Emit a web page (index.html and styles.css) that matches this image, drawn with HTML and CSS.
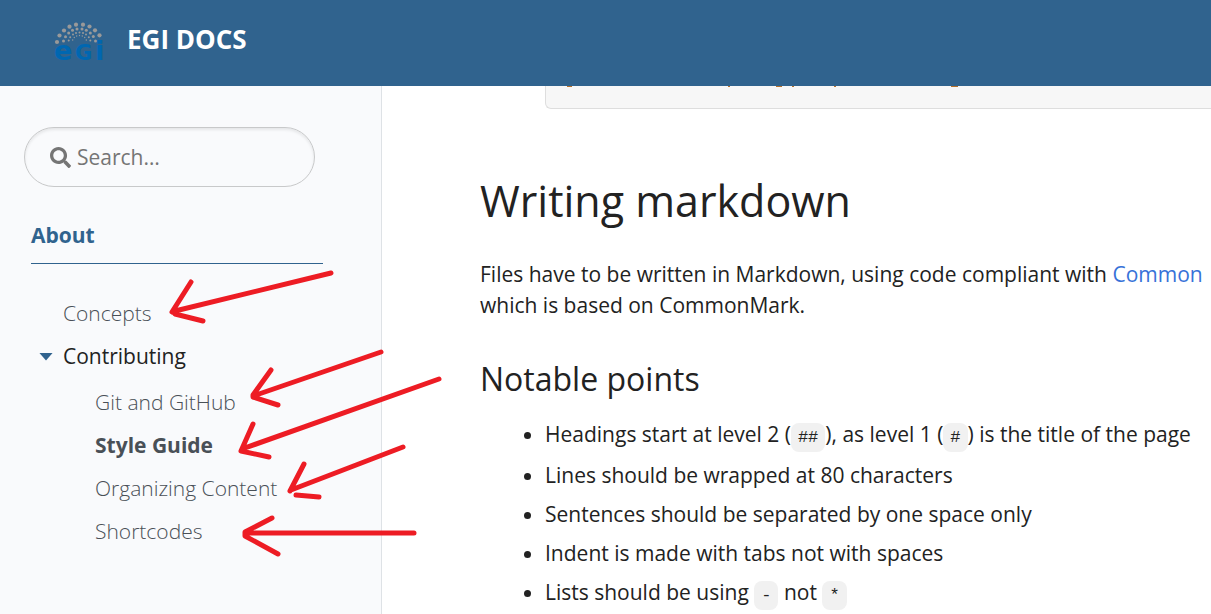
FILE: index.html
```html
<!DOCTYPE html>
<html lang="en">
<head>
<meta charset="utf-8">
<title>EGI Docs</title>
<link rel="stylesheet" href="styles.css">
</head>
<body>
<header class="navbar">
  <a class="brand" href="#">
    <svg class="brand-logo" viewBox="0 0 52 44" role="img" aria-label="EGI">
      <g class="logo-dots">
        <circle cx="3" cy="21" r="2.1"/><circle cx="5.500" cy="14.500" r="2.1"/><circle cx="10" cy="9.500" r="2.1"/><circle cx="15.500" cy="5.700" r="2.1"/><circle cx="22" cy="3.700" r="2.1"/><circle cx="29" cy="3.700" r="2.1"/><circle cx="35.500" cy="5.500" r="2.1"/><circle cx="41" cy="9.300" r="2.1"/><circle cx="45.500" cy="14.300" r="2.1"/>
        <circle cx="9.500" cy="20" r="1.5"/><circle cx="11.500" cy="15.700" r="1.5"/><circle cx="14.700" cy="12" r="1.5"/><circle cx="18.500" cy="9.300" r="1.5"/><circle cx="23" cy="8" r="1.5"/><circle cx="28" cy="8" r="1.5"/><circle cx="32.300" cy="9.300" r="1.5"/><circle cx="36.300" cy="12" r="1.5"/><circle cx="39.300" cy="15.500" r="1.500"/><circle cx="41.500" cy="20" r="1.500"/>
        <circle cx="14.700" cy="19.500" r="1"/><circle cx="16.200" cy="16.300" r="1"/><circle cx="19" cy="13.500" r="1"/><circle cx="22" cy="12" r="1"/><circle cx="25.500" cy="11.500" r="1"/><circle cx="29" cy="12" r="1"/><circle cx="32" cy="13.500" r="1"/><circle cx="34.800" cy="16.300" r="1"/><circle cx="36.300" cy="19.500" r="1"/>
        <circle cx="18.700" cy="19" r=".7"/><circle cx="20.300" cy="16.500" r=".7"/><circle cx="22.700" cy="15" r=".7"/><circle cx="25.500" cy="14.500" r=".7"/><circle cx="28.300" cy="15" r=".7"/><circle cx="30.700" cy="16.500" r=".7"/><circle cx="32.300" cy="19" r=".7"/>
      </g>
      <text class="logo-text" y="39"><tspan x="0">e</tspan><tspan class="logo-cap" x="21">G</tspan><tspan x="41">i</tspan></text>
    </svg>
    <span class="brand-name">EGI DOCS</span>
  </a>
</header>
<div class="layout">
  <aside class="sidebar">
    <label class="search">
      <svg class="search-icon" viewBox="0 0 512 512" aria-hidden="true"><path d="M505 442.700L405.300 343c-4.500-4.500-10.600-7-17-7H372c27.600-35.300 44-79.700 44-128C416 93.100 322.900 0 208 0S0 93.100 0 208s93.100 208 208 208c48.300 0 92.700-16.400 128-44v16.300c0 6.400 2.500 12.500 7 17l99.700 99.700c9.400 9.400 24.600 9.400 33.900 0l28.300-28.300c9.400-9.400 9.400-24.600.1-34zM208 336c-70.700 0-128-57.200-128-128 0-70.700 57.200-128 128-128 70.700 0 128 57.200 128 128 0 70.700-57.200 128-128 128z"/></svg>
      <input class="search-input" type="search" placeholder="Search…" aria-label="Search">
    </label>
    <nav class="menu">
      <a class="menu-title" href="#">About</a>
      <ul class="menu-list">
        <li><a class="menu-link" href="#">Concepts</a></li>
        <li>
          <a class="menu-link menu-open" href="#">Contributing</a>
          <ul class="submenu">
            <li><a class="menu-link" href="#">Git and GitHub</a></li>
            <li><a class="menu-link menu-active" href="#">Style Guide</a></li>
            <li><a class="menu-link" href="#">Organizing Content</a></li>
            <li><a class="menu-link" href="#">Shortcodes</a></li>
          </ul>
        </li>
      </ul>
    </nav>
  </aside>
  <main class="content">
    <div class="code-block">
      <svg class="code-tails" width="412" height="1" aria-hidden="true"><path d="M21 .5h5M182 .5h2M230 .5h6M246 .5h2M288 .5h2M405 .5h7"/></svg>
    </div>
    <h2>Writing markdown</h2>
    <p>Files have to be written in Markdown, using code compliant with <a href="#">Common</a><br>which is based on CommonMark.</p>
    <h3>Notable points</h3>
    <ul class="points">
      <li>Headings start at level 2 (<code>##</code>), as level 1 (<code>#</code>) is the title of the page</li>
      <li>Lines should be wrapped at 80 characters</li>
      <li>Sentences should be separated by one space only</li>
      <li>Indent is made with tabs not with spaces</li>
      <li>Lists should be using <code>-</code> not <code>*</code></li>
    </ul>
  </main>
</div>
<svg class="arrows" width="460" height="614" aria-hidden="true">
  <path d="M331 273L175 311M191 282L172 312M175 314L203 321"/>
  <path d="M381 352L256 395M271 370L253 395V397L278 405"/>
  <path d="M439 379L242 449M253 424L241 451L269 457"/>
  <path d="M403 447L291 490M304 464L290 491M296 495L319 497"/>
  <path d="M414 533H245M272 518L245 532V536L278 554"/>
</svg>
</body>
</html>
```
FILE: styles.css
```css
* {
  box-sizing: border-box;
}

body {
  position: relative;
  display: flex;
  flex-direction: column;
  min-height: 100vh;
  margin: 0;
  overflow: hidden;
  background: #fff;
  color: #222;
  font: 400 21px/31px "Open Sans", sans-serif;
}

ul {
  margin: 0;
  padding: 0;
  list-style: none;
}

.navbar {
  display: flex;
  align-items: center;
  height: 86px;
  padding: 0 54px;
  background: #30638e;
}

.brand {
  display: flex;
  align-items: center;
  gap: 21px;
  color: #fff;
  text-decoration: none;
}

.brand-logo {
  width: 52px;
  height: 44px;
  overflow: visible;
}

.logo-dots {
  fill: #999;
}

.logo-text {
  fill: #0067b1;
  font: 700 27px "DejaVu Sans", sans-serif;
}

.logo-cap {
  font-size: 21px;
}

.brand-name {
  padding-bottom: 8px;
  font-size: 26px;
  font-weight: 700;
}

.layout {
  display: flex;
  flex: 1;
}

.sidebar {
  flex: 0 0 382px;
  min-width: 0;
  padding: 41px 58px 24px 24px;
  border-right: 1px solid #dee2e6;
  background: #f9fafc;
}

.search {
  display: flex;
  align-items: center;
  gap: 6px;
  height: 60px;
  margin-right: 8px;
  padding: 0 25px;
  border: 1px solid #c8c9ca;
  border-radius: 30px;
  box-shadow: inset 0 2px 3px rgba(0, 0, 0, 0.08);
}

.search-icon {
  flex: none;
  width: 21px;
  height: 21px;
  fill: #757575;
}

.search-input {
  flex: 1;
  width: 100%;
  min-width: 0;
  padding: 0;
  border: 0;
  outline: 0;
  background: none;
  color: #222;
  font: inherit;
}

.search-input::placeholder {
  color: #757575;
}

.menu {
  padding: 33px 0 0 7px;
}

.menu-title {
  display: block;
  padding-bottom: 12px;
  border-bottom: 1px solid #30638e;
  color: #30638e;
  font-weight: 700;
}

.menu a {
  text-decoration: none;
}

.menu-list {
  padding: 28px 0 0 32px;
}

.menu-link {
  display: block;
  padding: 6px 0;
  color: #495057;
  font-weight: 300;
}

.menu-open {
  display: flex;
  align-items: center;
  gap: 10px;
  margin-left: -24px;
  color: #222;
  font-weight: 400;
}

.menu-open::before {
  width: 14px;
  height: 8px;
  background: #30638e;
  clip-path: polygon(0 0, 100% 0, 50% 100%);
  content: "";
}

.submenu {
  padding: 3px 0 0 32px;
}

.menu-active {
  font-weight: 700;
}

.content {
  flex: 1;
  min-width: 0;
  padding-left: 98px;
  white-space: nowrap;
}

.code-block {
  display: flex;
  height: 23px;
  margin-left: 65px;
  border: solid #dedede;
  border-width: 0 0 1px 1px;
  border-bottom-left-radius: 6px;
  background: #f7f7f7;
}

.code-tails {
  stroke: #b5702a;
}

h2,
h3,
p {
  margin: 0;
  font-weight: 400;
}

h2 {
  padding-top: 66px;
  font-size: 43px;
  line-height: 52px;
}

p {
  padding-top: 32px;
}

.content a {
  color: #3772d8;
  text-decoration: none;
}

h3 {
  padding-top: 38px;
  font-size: 32px;
  line-height: 40px;
}

.points {
  padding: 20px 0 0 65px;
  list-style: disc;
}

.points li {
  margin-bottom: 8px;
}

code {
  padding: 5px 7px;
  border-radius: 8px;
  background: #f1f1f1;
  font: 17px/28px "Liberation Mono", monospace;
}

.arrows {
  position: absolute;
  top: 0;
  left: 0;
  fill: none;
  stroke: #ed1c24;
  stroke-width: 5;
  stroke-linecap: round;
  stroke-linejoin: round;
  pointer-events: none;
}
```
